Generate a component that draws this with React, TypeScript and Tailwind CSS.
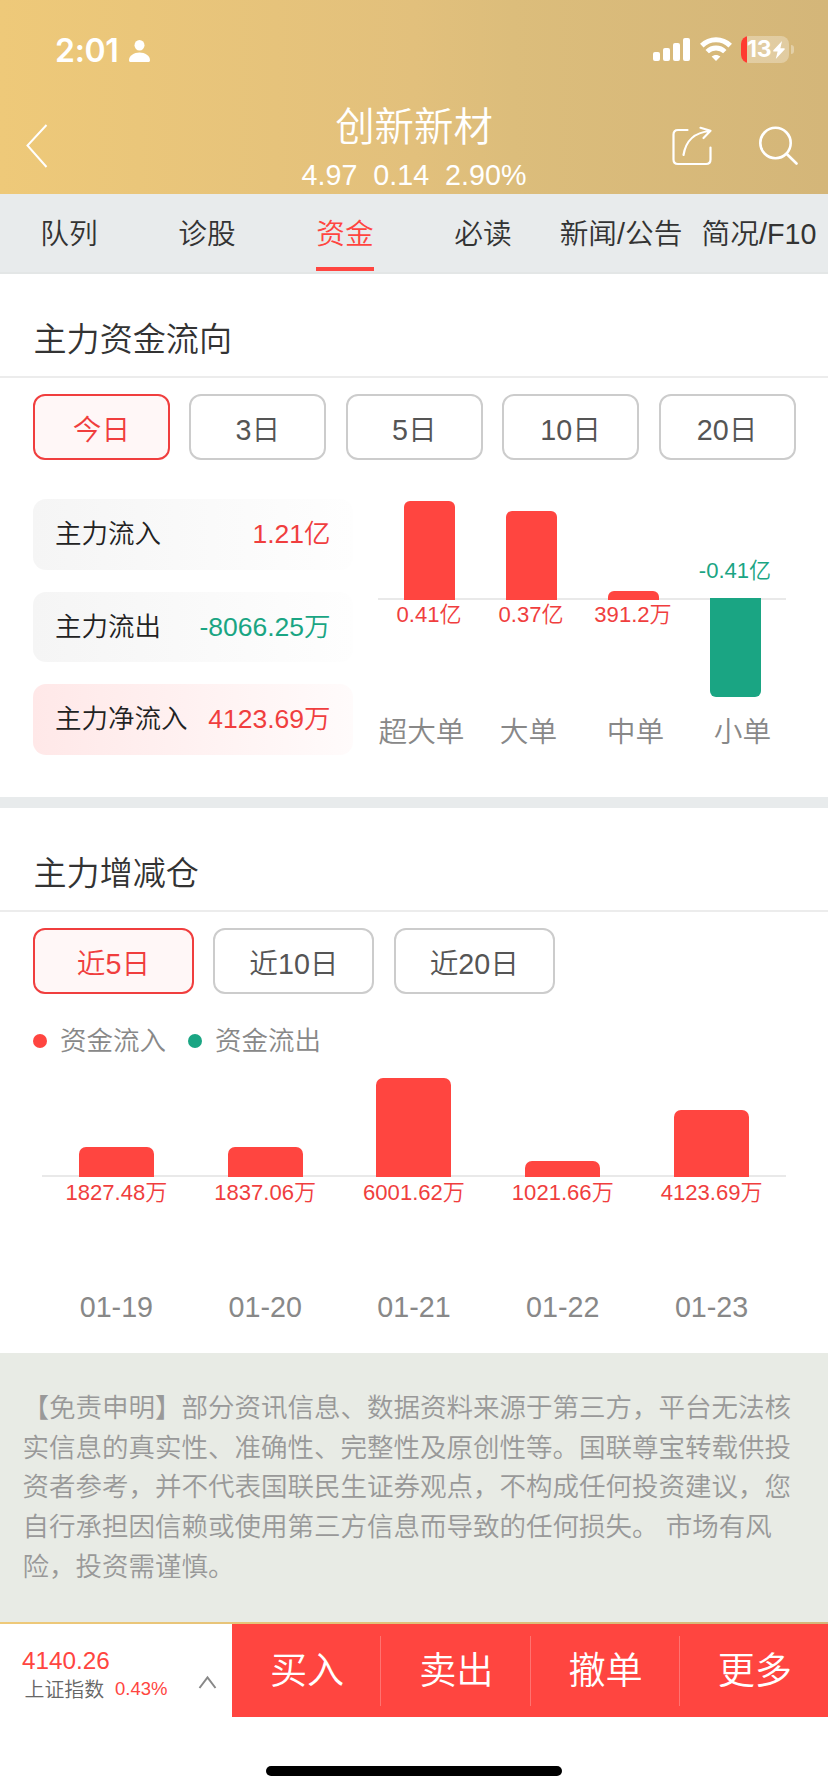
import React from 'react';

const tabs = ['队列', '诊股', '资金', '必读', '新闻/公告', '简况/F10'];
const flowPeriods = ['今日', '3日', '5日', '10日', '20日'];
const positionPeriods = ['近5日', '近10日', '近20日'];
const actions = ['买入', '卖出', '撤单', '更多'];

const orders = [
  { name: '超大单', label: '0.41亿', height: 99, out: false },
  { name: '大单', label: '0.37亿', height: 89, out: false },
  { name: '中单', label: '391.2万', height: 9, out: false },
  { name: '小单', label: '-0.41亿', height: 99, out: true },
];

const days = [
  { date: '01-19', label: '1827.48万', height: 30 },
  { date: '01-20', label: '1837.06万', height: 30 },
  { date: '01-21', label: '6001.62万', height: 99 },
  { date: '01-22', label: '1021.66万', height: 16 },
  { date: '01-23', label: '4123.69万', height: 67 },
];

const disclaimer = [
  '【免责申明】部分资讯信息、数据资料来源于第三方，平台无法核',
  '实信息的真实性、准确性、完整性及原创性等。国联尊宝转载供投',
  '资者参考，并不代表国联民生证券观点，不构成任何投资建议，您',
  '自行承担因信赖或使用第三方信息而导致的任何损失。 市场有风',
  '险，投资需谨慎。',
];

function StatusBar() {
  return (
    <div className="flex h-[100px] items-start justify-between pl-[55px] pr-[34px] pt-[36px]">
      <div className="flex items-center">
        <span className="w-[74px] pt-[1px] font-['Inter'] text-[32px] font-semibold leading-[28px] tracking-[-0.3px]">2:01</span>
        <svg className="h-[22px] w-[21px]" viewBox="0 0 21 22" fill="white">
          <ellipse cx="10.5" cy="5.3" rx="5" ry="5.3" />
          <path d="M0 20.2C0 15.8 5 12.6 10.5 12.6S21 15.8 21 20.2C21 21.3 20.4 22 19.3 22H1.7C.6 22 0 21.3 0 20.2Z" />
        </svg>
      </div>
      <div className="flex items-start">
        <svg className="mt-[2px] h-[23px] w-[37px]" viewBox="0 0 37 23" fill="white">
          <rect x="0" y="14" width="7" height="9" rx="2" />
          <rect x="10" y="10" width="7" height="13" rx="2" />
          <rect x="20" y="5" width="7" height="18" rx="2" />
          <rect x="30" y="0" width="7" height="23" rx="2" />
        </svg>
        <svg className="ml-[10px] mt-[1px] h-[24px] w-[32px]" viewBox="0 0 32 24" fill="none" stroke="white">
          <path d="M1.8 8.6C9.7 .8 22.3 .8 30.2 8.6" strokeWidth="5" />
          <path d="M7.2 14.6C12.1 9.8 19.9 9.8 24.8 14.6" strokeWidth="4.8" />
          <path d="M16 24 11.6 19.6C14 17.3 18 17.3 20.4 19.6Z" fill="white" stroke="none" />
        </svg>
        <div className="ml-[9px] flex h-[27px] w-[48px] items-center overflow-hidden rounded-[8px] bg-white/30">
          <div className="h-full w-[6px] bg-[#ff3b30]" />
          <span className="w-[25.500px] font-['Inter'] text-[23px] font-bold leading-[27px] tracking-[-0.2px]">13</span>
          <svg className="h-[18px] w-[12px]" viewBox="0 0 13 18" fill="white" preserveAspectRatio="none">
            <path d="M9.800 0 .4 9.300Q-.2 10.400 1 10.500H5L3 18 12.600 8.500Q13.200 7.400 12 7.300H8Z" />
          </svg>
        </div>
        <div className="ml-[2px] mt-[9px] h-[9px] w-[3px] rounded-r-full bg-white/35" />
      </div>
    </div>
  );
}

function Header() {
  return (
    <header className="h-[194px] bg-[linear-gradient(90deg,#eec979_0%,#e2c07c_50%,#dcbd7b_62%,#d4b679_100%)] text-white">
      <StatusBar />
      <div className="flex h-[94px] justify-between">
        <div className="w-[250px] pl-[26px] pt-[24px]">
          <svg className="h-[44px] w-[22px]" viewBox="0 0 22 44" fill="none" stroke="white" strokeWidth="2">
            <path d="M20.5 1 1.5 21.5 20.5 43" />
          </svg>
        </div>
        <div className="flex flex-col items-center whitespace-nowrap">
          <h1 className="h-[54px] text-[39.4px] leading-[54px]">创新新材</h1>
          <p className="whitespace-pre text-[28.7px] leading-[43px]">4.97  0.14  2.90%</p>
        </div>
        <div className="flex w-[250px] justify-end pr-[30px] pt-[26px]">
          <svg className="h-[40px] w-[40px]" viewBox="0 0 40 40" fill="none" stroke="white" strokeWidth="2.200" strokeLinecap="round" strokeLinejoin="round">
            <path d="M15.500 4H6Q1.500 4 1.500 8.500V33.500Q1.500 38 6 38H34Q38.500 38 38.500 33.500V21.500" />
            <path d="M11.500 29C14 14 22 6.500 38 5M28.500 1.800 38.500 4.800 31.500 12" />
          </svg>
          <svg className="ml-[47px] h-[40px] w-[39px]" viewBox="0 0 39 40" fill="none" stroke="white" strokeWidth="2.600" strokeLinecap="round">
            <circle cx="16.500" cy="17" r="15.200" />
            <path d="M27.800 28 37.500 37.500" />
          </svg>
        </div>
      </div>
    </header>
  );
}

function Tabs() {
  return (
    <nav className="grid h-[80px] grid-cols-6 border-b-2 border-[#e3e6e6] bg-[#e8ebec] text-[28.7px] text-[#333]">
      {tabs.map((tab) => (
        <div key={tab} className="flex flex-col items-center whitespace-nowrap">
          <span className={tab === '资金' ? 'h-[73px] leading-[81px] text-[#ff4540]' : 'h-[73px] leading-[81px]'}>{tab}</span>
          {tab === '资金' && <span className="h-[4px] w-[58px] bg-[#ff4540]" />}
        </div>
      ))}
    </nav>
  );
}

function SectionTitle({ children }: { children: React.ReactNode }) {
  return (
    <h2 className="h-[104px] border-b-2 border-[#ececec] pl-[33.500px] pt-[38px] text-[33.1px] leading-[56px] text-[#333]">{children}</h2>
  );
}

function Periods({ items, width }: { items: string[]; width: string }) {
  return (
    <div className="flex gap-[19.400px] pl-[33px] pt-[16px] text-[28.7px]">
      {items.map((item, i) => (
        <button
          key={item}
          className={`${width} h-[66px] rounded-[12px] border-2 pt-[3px] leading-[62px] ${i === 0 ? 'border-[#f03e3e] bg-[#fff7f7] text-[#f03e3e]' : 'border-[#ccc] text-[#555]'}`}
        >
          {item}
        </button>
      ))}
    </div>
  );
}

function FlowRow({ name, value, box, color }: { name: string; value: string; box: string; color: string }) {
  return (
    <div className={`flex h-[70.500px] justify-between rounded-[13px] bg-linear-to-r pl-[22px] pr-[22.500px] text-[26.5px] leading-[70px] ${box}`}>
      <span className="text-[#222]">{name}</span>
      <span className={color}>{value}</span>
    </div>
  );
}

function OrderChart() {
  return (
    <div className="ml-[25px] w-[408px]">
      <div className="flex h-[216px] bg-[linear-gradient(#e9e9e9,#e9e9e9)] bg-[length:100%_2px] bg-[position:0_99px] bg-no-repeat">
        {orders.map((o) => (
          <div key={o.name} className="flex flex-1 flex-col items-center whitespace-nowrap text-[22.080px]">
            {o.out ? (
              <>
                <span className="mt-[57px] h-[42px] leading-[30px] text-[#1aa583]">{o.label}</span>
                <span className="w-[51px] rounded-b-[6px] bg-[#1aa583]" style={{ height: o.height }} />
              </>
            ) : (
              <>
                <span className="flex h-[101px] items-end">
                  <span className="w-[51px] rounded-t-[6px] bg-[#ff4540]" style={{ height: o.height }} />
                </span>
                <span className="leading-[30px] text-[#f03e3e]">{o.label}</span>
              </>
            )}
          </div>
        ))}
      </div>
      <div className="-mx-[10px] grid grid-cols-4 text-center text-[28.7px] leading-[34px] text-[#888]">
        {orders.map((o) => (
          <span key={o.name}>{o.name}</span>
        ))}
      </div>
    </div>
  );
}

function DailyChart() {
  return (
    <div className="ml-[42px] mt-[19px] flex h-[276px] w-[744px] bg-[linear-gradient(#e9e9e9,#e9e9e9)] bg-[length:100%_2px] bg-[position:0_98px] bg-no-repeat">
      {days.map((d) => (
        <div key={d.date} className="flex flex-1 flex-col items-center">
          <span className="flex h-[100px] items-end">
            <span className="w-[75px] rounded-t-[7px] bg-[#ff4540]" style={{ height: d.height }} />
          </span>
          <span className="text-[22.080px] leading-[32px] text-[#f03e3e]">{d.label}</span>
          <span className="mt-[81px] text-[28.7px] leading-[34px] text-[#888]">{d.date}</span>
        </div>
      ))}
    </div>
  );
}

function Footer() {
  return (
    <footer className="flex h-[170px] flex-col">
      <div className="h-[2px] bg-[linear-gradient(90deg,#eec979,#d4b679)]" />
      <div className="flex h-[93px]">
        <div className="flex w-[232px] pl-[22px] pt-[22px]">
          <div className="w-[176px]">
            <div className="text-[24.300px] leading-[30px] text-[#ff4540]">4140.26</div>
            <div className="flex pl-[2.500px] leading-[28px]">
              <span className="w-[90.500px] text-[19.900px] text-[#666]">上证指数</span>
              <span className="text-[18.500px] leading-[26px] text-[#ff4540]">0.43%</span>
            </div>
          </div>
          <svg className="mt-[29px] h-[14px] w-[20px]" viewBox="0 0 20 14" fill="none" stroke="#888" strokeWidth="2">
            <path d="M1.500 13 9.500 2.500 17.500 13" />
          </svg>
        </div>
        <div className="flex flex-1 items-center bg-[#ff4540] text-[37.200px] text-white">
          {actions.map((a, i) => (
            <div key={a} className={`h-[70px] flex-1 pl-[2px] text-center leading-[70px] ${i < 3 ? 'border-r border-white/25' : ''}`}>
              {a}
            </div>
          ))}
        </div>
      </div>
      <div className="mx-auto mt-[49px] h-[10px] w-[296px] rounded-full bg-black" />
    </footer>
  );
}

export default function App() {
  return (
    <div className="h-[1792px] w-[828px] overflow-hidden bg-white font-['Liberation_Sans','Noto_Sans_CJK_SC',sans-serif] font-[350]">
      <Header />
      <Tabs />
      <section className="h-[523px]">
        <SectionTitle>主力资金流向</SectionTitle>
        <Periods items={flowPeriods} width="w-[137px]" />
        <div className="flex pl-[33px] pt-[39px]">
          <div className="flex w-[320px] flex-col gap-[22px]">
            <FlowRow name="主力流入" value="1.21亿" box="from-[#f5f5f5] to-[#fefefe]" color="text-[#f03e3e]" />
            <FlowRow name="主力流出" value="-8066.25万" box="from-[#f5f5f5] to-[#fefefe]" color="text-[#1aa583]" />
            <FlowRow name="主力净流入" value="4123.69万" box="from-[#ffe8e8] to-[#fffbfb]" color="text-[#f03e3e]" />
          </div>
          <OrderChart />
        </div>
      </section>
      <div className="h-[11px] bg-[#e8ebec]" />
      <section className="h-[545px]">
        <SectionTitle>主力增减仓</SectionTitle>
        <Periods items={positionPeriods} width="w-[161px]" />
        <div className="flex h-[64px] items-end pl-[33px] text-[26.5px] leading-[34px] text-[#888]">
          <i className="mb-[10px] mr-[13px] h-[14px] w-[14px] rounded-full bg-[#ff4540]" />
          <span className="w-[128px]">资金流入</span>
          <i className="mb-[10px] mr-[13px] h-[14px] w-[14px] rounded-full bg-[#1aa583]" />
          <span>资金流出</span>
        </div>
        <DailyChart />
      </section>
      <section className="h-[269px] bg-[#e8ebe5] pl-[22.500px] pt-[36px] text-[26.5px] leading-[39.700px] text-[#999]">
        {disclaimer.map((line) => (
          <p key={line} className="whitespace-nowrap">{line}</p>
        ))}
      </section>
      <Footer />
    </div>
  );
}
